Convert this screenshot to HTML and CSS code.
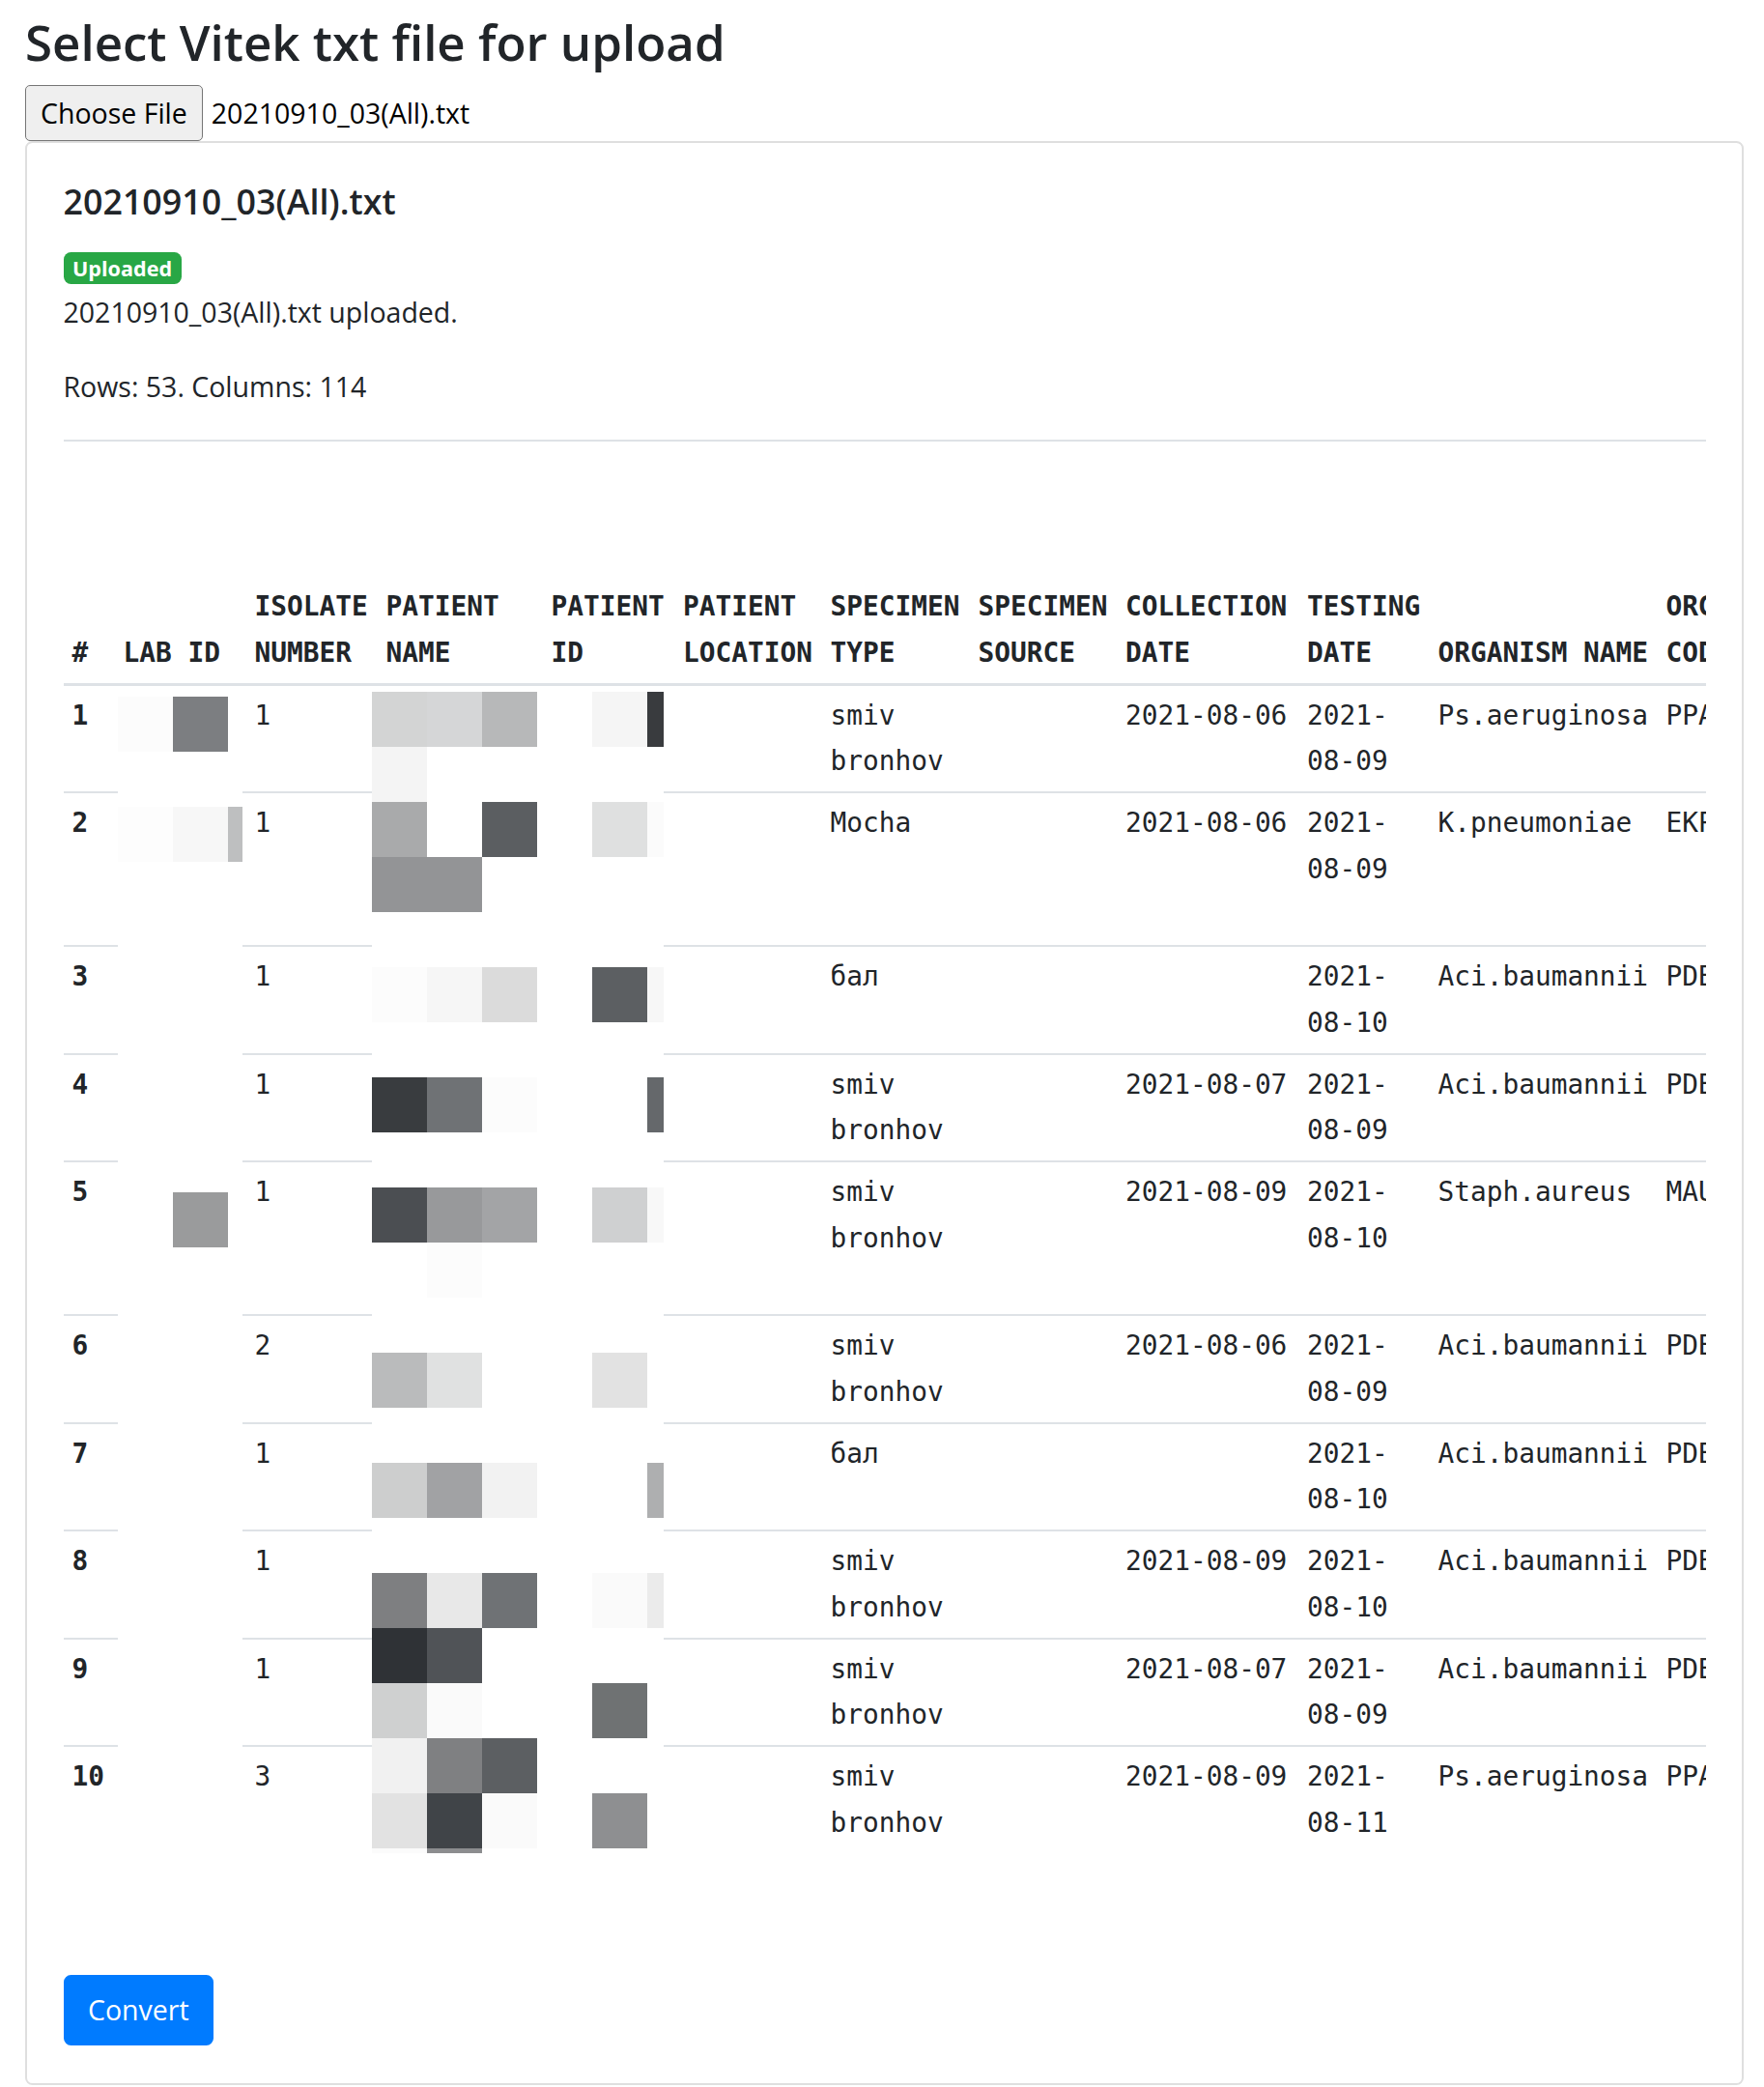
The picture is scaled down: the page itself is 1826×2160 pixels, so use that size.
FILE: index.html
```html
<!DOCTYPE html>
<html lang="en">
<head>
<meta charset="utf-8">
<title>Select Vitek txt file for upload</title>
<link rel="stylesheet" href="styles.css">
</head>
<body>
<main class="page">
  <h3 class="page-title">Select Vitek txt file for upload</h3>
  <div class="file-input">
    <span class="file-btn">Choose File</span>
    <span class="file-name">20210910_03(All).txt</span>
  </div>
  <section class="card">
    <div class="card-body">
      <h5 class="card-title">20210910_03(All).txt</h5>
      <div class="status"><span class="badge">Uploaded</span></div>
      <p class="msg">20210910_03(All).txt uploaded.</p>
      <p class="msg">Rows: 53. Columns: 114</p>
      <hr class="divider">
      <div class="table-wrap">
        <table class="data">
          <colgroup>
            <col class="c-num"><col class="c-lab"><col class="c-iso"><col class="c-name"><col class="c-pid"><col class="c-loc"><col class="c-type"><col class="c-src"><col class="c-coll"><col class="c-test"><col class="c-org"><col class="c-code">
          </colgroup>
          <thead>
            <tr><th>#</th><th>LAB ID</th><th>ISOLATE NUMBER</th><th>PATIENT NAME</th><th>PATIENT ID</th><th>PATIENT LOCATION</th><th>SPECIMEN TYPE</th><th>SPECIMEN SOURCE</th><th>COLLECTION DATE</th><th>TESTING DATE</th><th>ORGANISM NAME</th><th>ORGANISM CODE</th></tr>
          </thead>
          <tbody>
            <tr><th>1</th><td></td><td>1</td><td></td><td></td><td></td><td>smiv bronhov</td><td></td><td>2021-08-06</td><td>2021-<wbr>08-09</td><td>Ps.aeruginosa</td><td>PPA</td></tr>
            <tr><th>2</th><td></td><td>1</td><td><div class="redacted-3"></div></td><td></td><td></td><td>Mocha</td><td></td><td>2021-08-06</td><td>2021-<wbr>08-09</td><td>K.pneumoniae</td><td>EKP</td></tr>
            <tr><th>3</th><td></td><td>1</td><td></td><td></td><td></td><td>бал</td><td></td><td></td><td>2021-<wbr>08-10</td><td>Aci.baumannii</td><td>PDB</td></tr>
            <tr><th>4</th><td></td><td>1</td><td></td><td></td><td></td><td>smiv bronhov</td><td></td><td>2021-08-07</td><td>2021-<wbr>08-09</td><td>Aci.baumannii</td><td>PDB</td></tr>
            <tr><th>5</th><td></td><td>1</td><td><div class="redacted-3"></div></td><td></td><td></td><td>smiv bronhov</td><td></td><td>2021-08-09</td><td>2021-<wbr>08-10</td><td>Staph.aureus</td><td>MAU</td></tr>
            <tr><th>6</th><td></td><td>2</td><td></td><td></td><td></td><td>smiv bronhov</td><td></td><td>2021-08-06</td><td>2021-<wbr>08-09</td><td>Aci.baumannii</td><td>PDB</td></tr>
            <tr><th>7</th><td></td><td>1</td><td></td><td></td><td></td><td>бал</td><td></td><td></td><td>2021-<wbr>08-10</td><td>Aci.baumannii</td><td>PDB</td></tr>
            <tr><th>8</th><td></td><td>1</td><td></td><td></td><td></td><td>smiv bronhov</td><td></td><td>2021-08-09</td><td>2021-<wbr>08-10</td><td>Aci.baumannii</td><td>PDB</td></tr>
            <tr><th>9</th><td></td><td>1</td><td></td><td></td><td></td><td>smiv bronhov</td><td></td><td>2021-08-07</td><td>2021-<wbr>08-09</td><td>Aci.baumannii</td><td>PDB</td></tr>
            <tr><th>10</th><td></td><td>3</td><td></td><td></td><td></td><td>smiv bronhov</td><td></td><td>2021-08-09</td><td>2021-<wbr>08-11</td><td>Ps.aeruginosa</td><td>PPA</td></tr>
          </tbody>
        </table>
        <div class="mosaic mosaic-lab">
          <span style="grid-area:2/1;background:#fcfcfc"></span>
          <span style="grid-area:2/2;background:#7c7e81"></span>
          <span style="grid-area:4/1;background:#fdfdfd"></span>
          <span style="grid-area:4/2;background:#f7f7f7"></span>
          <span style="grid-area:4/3;background:#bebfc0"></span>
          <span style="grid-area:11/2;background:#9a9b9c"></span>
        </div>
        <div class="mosaic mosaic-patient">
          <span style="grid-area:2/1;background:#d3d4d4"></span>
          <span style="grid-area:2/2;background:#d5d6d7"></span>
          <span style="grid-area:2/3;background:#b7b8b9"></span>
          <span style="grid-area:2/5;background:#f5f5f5"></span>
          <span style="grid-area:2/6;background:#393b3e"></span>
          <span style="grid-area:3/1;background:#f4f4f4"></span>
          <span style="grid-area:4/1;background:#a9aaab"></span>
          <span style="grid-area:4/3;background:#5b5e61"></span>
          <span style="grid-area:4/5;background:#dfe0e0"></span>
          <span style="grid-area:4/6;background:#fbfbfb"></span>
          <span style="grid-area:5/1;background:#939496"></span>
          <span style="grid-area:5/2;background:#939496"></span>
          <span style="grid-area:7/1;background:#fcfcfc"></span>
          <span style="grid-area:7/2;background:#f6f6f6"></span>
          <span style="grid-area:7/3;background:#dbdbdb"></span>
          <span style="grid-area:7/5;background:#5c5f62"></span>
          <span style="grid-area:7/6;background:#f7f7f7"></span>
          <span style="grid-area:9/1;background:#393c3f"></span>
          <span style="grid-area:9/2;background:#6f7275"></span>
          <span style="grid-area:9/3;background:#fcfcfc"></span>
          <span style="grid-area:9/6;background:#65686b"></span>
          <span style="grid-area:11/1;background:#4b4e52"></span>
          <span style="grid-area:11/2;background:#98999b"></span>
          <span style="grid-area:11/3;background:#a3a4a6"></span>
          <span style="grid-area:11/5;background:#cfd0d1"></span>
          <span style="grid-area:11/6;background:#f8f8f8"></span>
          <span style="grid-area:12/2;background:#fcfcfc"></span>
          <span style="grid-area:14/1;background:#babbbc"></span>
          <span style="grid-area:14/2;background:#e0e1e1"></span>
          <span style="grid-area:14/5;background:#e2e2e2"></span>
          <span style="grid-area:16/1;background:#cdcece"></span>
          <span style="grid-area:16/2;background:#a1a2a4"></span>
          <span style="grid-area:16/3;background:#f2f2f2"></span>
          <span style="grid-area:16/6;background:#aeafb0"></span>
          <span style="grid-area:18/1;background:#7e7f81"></span>
          <span style="grid-area:18/2;background:#e8e8e8"></span>
          <span style="grid-area:18/3;background:#6f7275"></span>
          <span style="grid-area:18/5;background:#fafafa"></span>
          <span style="grid-area:18/6;background:#ebebeb"></span>
          <span style="grid-area:19/1;background:#2f3236"></span>
          <span style="grid-area:19/2;background:#505357"></span>
          <span style="grid-area:20/1;background:#cfd0d0"></span>
          <span style="grid-area:20/2;background:#fafafa"></span>
          <span style="grid-area:20/5;background:#6f7273"></span>
          <span style="grid-area:21/1;background:#f1f1f1"></span>
          <span style="grid-area:21/2;background:#7f8082"></span>
          <span style="grid-area:21/3;background:#5c5f62"></span>
          <span style="grid-area:22/1;background:#e2e2e2"></span>
          <span style="grid-area:22/2;background:#404448"></span>
          <span style="grid-area:22/3;background:#fafafa"></span>
          <span style="grid-area:22/5;background:#8e8f91"></span>
          <span style="grid-area:23/1;background:#fbfbfb"></span>
          <span style="grid-area:23/2;background:#8c8d8f"></span>
        </div>
      </div>
      <button class="btn-convert" type="button">Convert</button>
    </div>
  </section>
</main>
</body>
</html>
```

FILE: styles.css
```css
html, body {
  margin: 0;
  padding: 0;
  background: #ffffff;
}

body {
  font-family: "Open Sans", "Noto Sans", sans-serif;
  font-size: 28.5px;
  line-height: 45px;
  color: #212529;
}

.page {
  padding: 12px 21px 0 26px;
}

.page-title {
  margin: 0 0 13px;
  font-size: 51px;
  line-height: 63px;
  font-weight: 600;
}

.file-input {
  display: flex;
  align-items: center;
  gap: 9px;
  height: 58px;
}

.file-btn {
  box-sizing: border-box;
  display: flex;
  align-items: center;
  height: 57.5px;
  padding: 0 15px;
  border: 1.5px solid #767676;
  border-radius: 5px;
  background: #efefef;
  color: #000000;
}

.file-name {
  color: #000000;
}

.card {
  border: 2px solid #dfdfdf;
  border-radius: 7.5px;
  background: #ffffff;
}

.card-body {
  padding: 37.5px 37.5px 39px;
}

.card-title {
  margin: 0 0 22.5px;
  font-size: 35.8px;
  line-height: 45px;
  font-weight: 600;
}

.status {
  height: 45px;
  margin-bottom: 3px;
}

.badge {
  display: inline-block;
  padding: 5.6px 9.5px;
  font-size: 21.6px;
  line-height: 1;
  font-weight: 700;
  color: #ffffff;
  background: #28a745;
  border-radius: 7.5px;
}

.msg {
  margin: 0 0 32px;
}

.divider {
  margin: 0;
  border: 0;
  border-top: 2px solid #dee2e6;
}

.table-wrap {
  position: relative;
  overflow: hidden;
  margin: 140px 0 126px;
}

.data {
  table-layout: fixed;
  border-collapse: separate;
  border-spacing: 0;
  width: 1810px;
  font-family: "DejaVu Sans Mono", "Liberation Mono", monospace;
  font-size: 27.8px;
  line-height: 47.5px;
  color: #212529;
}

.c-num { width: 53px; }
.c-lab { width: 136px; }
.c-iso { width: 136px; }
.c-name { width: 171px; }
.c-pid { width: 136.5px; }
.c-loc { width: 152.5px; }
.c-type { width: 153px; }
.c-src { width: 152.5px; }
.c-coll { width: 188px; }
.c-test { width: 135.5px; }
.c-org { width: 236px; }
.c-code { width: 160px; }

.data th,
.data td {
  padding: 7.25px 9px;
  text-align: left;
  vertical-align: top;
  overflow: visible;
}

.data thead th {
  vertical-align: bottom;
  font-weight: 700;
  border-bottom: 3px solid #dee2e6;
}

.data tbody tr + tr th,
.data tbody tr + tr td {
  border-top: 2px solid #dee2e6;
}

.data tbody th {
  font-weight: 700;
}

.redacted-3 {
  height: 142.5px;
}

.mosaic {
  position: absolute;
  top: 112.5px;
  height: 1211px;
  display: grid;
  overflow: hidden;
  background: #ffffff;
}

.mosaic-lab {
  left: 56.5px;
  width: 129px;
  grid-template-columns: 57px 57px 15px;
  grid-template-rows: 11px;
  grid-auto-rows: 57px;
}

.mosaic-patient {
  left: 319.5px;
  width: 302px;
  grid-template-columns: 57px 57px 57px 57px 57px 17px;
  grid-template-rows: 6px;
  grid-auto-rows: 57px;
}

.btn-convert {
  display: inline-block;
  margin: 0;
  padding: 12px 23.5px;
  font-family: inherit;
  font-size: 28.5px;
  line-height: 45px;
  font-weight: 400;
  color: #ffffff;
  background: #007bff;
  border: 2px solid #007bff;
  border-radius: 7.5px;
  cursor: pointer;
}
```
